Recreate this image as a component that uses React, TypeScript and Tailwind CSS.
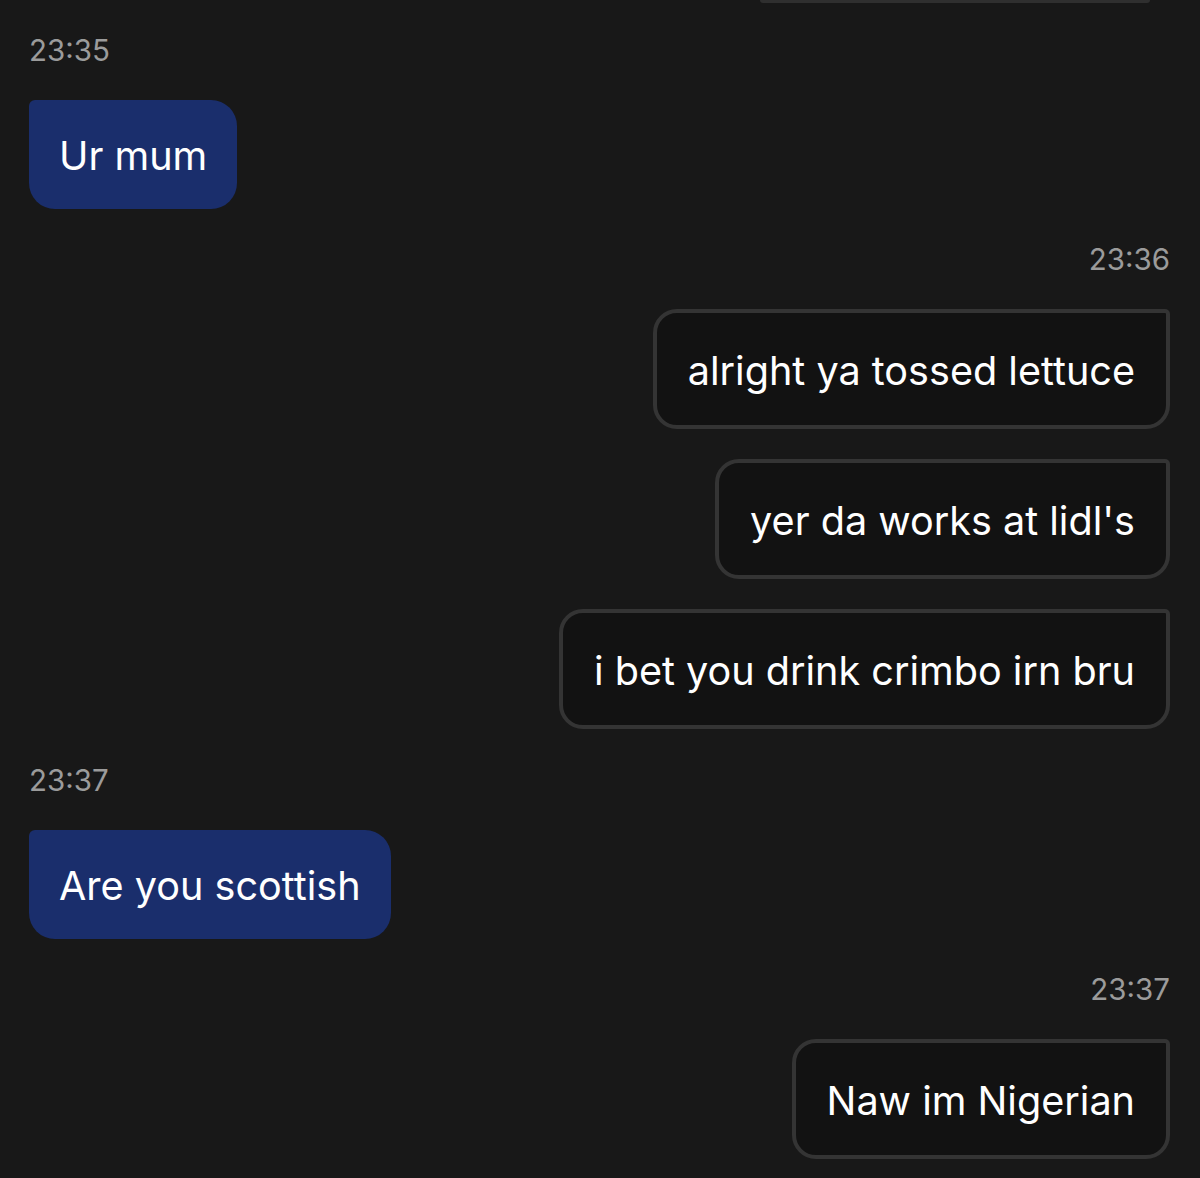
const font = { fontFamily: "Inter, 'Liberation Sans', sans-serif" };

function Stamp({ time, right }: { time: string; right?: boolean }) {
    return (
        <div className={`text-[29.5px] leading-[34px] text-[#9b9b9b] ${right ? "self-end" : "self-start"}`}>
            {time}
        </div>
    );
}

function Incoming({ text }: { text: string }) {
    return (
        <div className="self-start flex h-[109px] items-center rounded-[26px] rounded-tl-[6px] bg-[#1a2e6c] px-[30px] pt-[5px] text-[39.6px] text-white">
            {text}
        </div>
    );
}

function Outgoing({ text }: { text: string }) {
    return (
        <div className="self-end flex h-[120px] items-center rounded-[24px] rounded-tr-[5px] border-[4px] border-[#343434] bg-[#121212] px-[31px] pt-[5px] text-[39.6px] text-white">
            {text}
        </div>
    );
}

export default function App() {
    return (
        <div className="min-h-[1178px] w-full bg-[#181818]" style={font}>
            <div className="flex justify-end pr-[50px]">
                <div className="h-[3px] w-[390px] rounded-b-full bg-[#2f2f2f]" />
            </div>
            <div className="flex flex-col pl-[29px] pr-[30px] pt-[30px]">
                <Stamp time="23:35" />
                <div className="mt-[33px]" />
                <Incoming text="Ur mum" />

                <div className="mt-[33px]" />
                <Stamp time="23:36" right />
                <div className="mt-[33px] flex flex-col gap-[30px]">
                    <Outgoing text="alright ya tossed lettuce" />
                    <Outgoing text="yer da works at lidl's" />
                    <Outgoing text="i bet you drink crimbo irn bru" />
                </div>

                <div className="mt-[34px]" />
                <Stamp time="23:37" />
                <div className="mt-[33px]" />
                <Incoming text="Are you scottish" />

                <div className="mt-[33px]" />
                <Stamp time="23:37" right />
                <div className="mt-[33px]" />
                <Outgoing text="Naw im Nigerian" />
            </div>
        </div>
    );
}
